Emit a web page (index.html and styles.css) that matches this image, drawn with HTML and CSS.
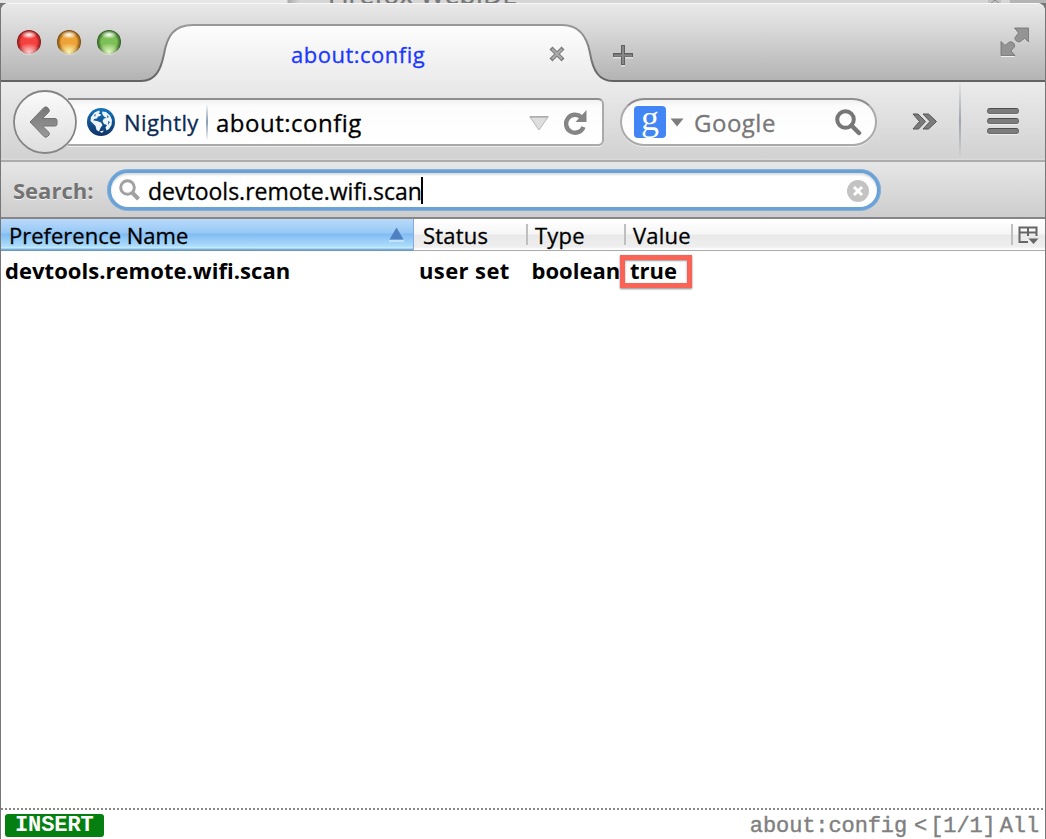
FILE: index.html
```html
<!DOCTYPE html>
<html lang="en">
<head>
<meta charset="utf-8">
<title>about:config</title>
<link rel="stylesheet" href="styles.css">
</head>
<body>
<div class="desktop">
  <div class="behind">
    <span class="behind-title">Firefox WebIDE</span>
    <svg class="behind-right" width="64" height="12" viewBox="0 0 64 12"><path d="M6 0v4h13V0z" fill="#c2c2c2"/><path d="M8 4l5-4 5 4" fill="none" stroke="#888"/><path d="M28 0h36v12H28z" fill="#b4b4b4"/></svg>
  </div>
  <div class="window">
    <header class="titlebar">
      <svg class="tab-shape" width="1044" height="79" viewBox="1 3 1044 79">
        <defs>
          <linearGradient id="tabfill" x1="0" y1="0" x2="0" y2="1"><stop offset="0" stop-color="#fdfdfd"/><stop offset="1" stop-color="#ebebeb"/></linearGradient>
          <linearGradient id="tabline" gradientUnits="userSpaceOnUse" x1="0" y1="24" x2="0" y2="82"><stop offset="0" stop-color="#999"/><stop offset="1" stop-color="#626262"/></linearGradient>
        </defs>
        <path d="M0 82.500V81H141C156 81 161 69 164 54C167 37 173 25 193 25H562C580 25 587 37 590 53C593 71 599 81 613 81H1046V82.500z" fill="url(#tabfill)"/>
        <path d="M0 81H141C156 81 161 69 164 54C167 37 173 25 193 25H562C580 25 587 37 590 53C593 71 599 81 613 81H1046" fill="none" stroke="url(#tabline)" stroke-width="2"/>
      </svg>
      <div class="lights"><i class="light red"></i><i class="light amber"></i><i class="light green"></i></div>
      <div class="tab">
        <span class="tab-label">about:config</span>
        <svg class="tab-close" width="18" height="18" viewBox="0 0 18 18"><path d="M3.500 3.500l11 11M14.500 3.500l-11 11" stroke="#fff" stroke-width="4" transform="translate(0 1)"/><path d="M3 3l12 12M15 3l-12 12" stroke="#777" stroke-width="4.200"/><path d="M4 4l10 10M14 4l-10 10" stroke="#aaa" stroke-width="2.400"/></svg>
      </div>
      <svg class="new-tab" width="22" height="24" viewBox="0 0 22 24"><path d="M1 12.500h20M11 2.500v20" stroke="#dedede" stroke-width="4"/><path d="M1 11h20M11 1v20" stroke="#606060" stroke-width="4"/><path d="M2 11.500h18M11 2v18" stroke="#888" stroke-width="2"/></svg>
      <svg class="expand" width="30" height="32" viewBox="0 0 30 32"><g fill="#f0f0f0" transform="translate(0 1)"><path d="M14.500 1H29V15.500L24.500 11.500L20 15A4 4 0 0 1 15 10.500L18.500 6z"/><path d="M15 29H1V14.500L5 18.500L9.500 15A4 4 0 0 1 14.500 20L11 24z"/></g><g fill="#949494" stroke="#6f6f6f" stroke-width=".8"><path d="M14.500 1H28.500V15L24.500 11.500L20 15A4 4 0 0 1 15 10.500L18.500 6z"/><path d="M15 28.500H1V14.500L5 18.500L9.500 15A4 4 0 0 1 14.500 20L11 24z"/></g></svg>
    </header>

    <nav class="navbar">
      <svg class="back" width="64" height="64" viewBox="0 0 64 64">
        <defs><linearGradient id="bk" x1="0" y1="0" x2="0" y2="1"><stop offset="0" stop-color="#fbfbfb"/><stop offset="1" stop-color="#dedede"/></linearGradient><linearGradient id="ar" x1="0" y1="0" x2="0" y2="1"><stop offset="0" stop-color="#777"/><stop offset="1" stop-color="#999"/></linearGradient></defs>
        <circle cx="32" cy="32" r="31" fill="url(#bk)" stroke="#858585" stroke-width="1.800"/>
        <path d="M17 32L31 17.500Q33 16 35 18L36 19.500Q37 21 35.500 22.500L29.500 28.500H42Q44 28.500 44 30.500V34Q44 36 42 36H29.500L35.500 42Q37 43.500 36 45L34.500 46.500Q33 48 31 46.500z" fill="url(#ar)" stroke="#737373" stroke-width="1"/>
      </svg>
      <div class="urlbar">
        <svg class="globe" width="28" height="28" viewBox="0 0 28 28"><defs><linearGradient id="gl" x1="0" y1="0" x2="0" y2="1"><stop offset="0" stop-color="#1274bd"/><stop offset="1" stop-color="#123366"/></linearGradient></defs><circle cx="14" cy="14" r="14" fill="url(#gl)"/><path d="M7.500 4.500L12 2.500L13 4L11.500 5.500L14 6.500L13.500 8L11 8.500L10 10.500L7 11L6.500 12.500L10 13L14 14.500L15.500 17L13.500 20L12 23.500L9.500 22L8.500 18L5.500 15L3.500 13L4 9zM15 3.500L19 4L23 7.500L25 12L24.500 17L22 21L19.500 22.500L18.500 19.500L20 17L17 16L15.500 13L17 10.500L19.500 10L17 8.500L15.500 6.500zM12.500 23.500L17 22.500L15 25z" fill="#eef5fb"/><path d="M20 7l2 2-2 1zM7 7l2-1-1 3zM21 13l2 1-2 3z" fill="#2874b4"/></svg>
        <span class="identity">Nightly</span>
        <i class="url-divider"></i>
        <span class="url">about:config</span>
        <svg class="drop" width="20" height="15" viewBox="0 0 20 15"><path d="M1 1H19L10 14z" fill="#dedede" stroke="#b8b8b8"/><path d="M.5 .8H19.500" stroke="#999"/></svg>
        <svg class="reload" width="24" height="26" viewBox="0 0 24 26"><path d="M17.300 8.200A9 9 0 1 0 19.500 18" fill="none" stroke="#858585" stroke-width="4.400"/><path d="M22.500 1V13H11.500z" fill="#858585"/></svg>
      </div>
      <div class="searchbar">
        <span class="engine">g</span>
        <svg class="engine-arrow" width="14" height="9" viewBox="0 0 14 9"><path d="M.5 .5H13.500L7 8.500z" fill="#7d7d7d"/></svg>
        <span class="engine-name">Google</span>
        <svg class="glass" width="27" height="27" viewBox="0 0 27 27"><circle cx="10.500" cy="10.500" r="8.300" fill="none" stroke="#777" stroke-width="4"/><path d="M16.500 16.500L24 24" stroke="#777" stroke-width="4.500" stroke-linecap="round"/></svg>
      </div>
      <svg class="overflow" width="26" height="18" viewBox="0 0 26 18"><g fill="#7b7b7b" stroke="#555" stroke-width="1"><path d="M1 1H6L13.500 8.500L6.500 16H1L7.500 8.500z"/><path d="M11 1H16.500L24.500 8.500L16.500 16H11L18 8.500z"/></g></svg>
      <i class="nav-divider"></i>
      <div class="menu"><i></i><i></i><i></i></div>
    </nav>

    <section class="filter">
      <span class="filter-label">Search:</span>
      <div class="filter-box">
        <svg width="22" height="23" viewBox="0 0 22 23"><circle cx="8.500" cy="8.500" r="6.800" fill="none" stroke="#a1a1a1" stroke-width="3"/><path d="M13.500 14L19.500 20" stroke="#a1a1a1" stroke-width="4"/></svg>
        <span class="filter-text">devtools.remote.wifi.scan</span><i class="caret"></i>
        <svg class="clear" width="22" height="22" viewBox="0 0 22 22"><circle cx="11" cy="11" r="11" fill="#c3c3c3"/><path d="M7 7l8 8M15 7l-8 8" stroke="#fff" stroke-width="3"/></svg>
      </div>
    </section>

    <div class="columns head">
      <div class="col sorted"><span class="h1">Preference Name</span><svg width="15" height="15" viewBox="0 0 15 15"><path d="M0 14h15" stroke="#c5e3fa" stroke-width="2"/><path d="M7.500 .5L14.500 12.500H.5z" fill="#4f81c2"/></svg></div>
      <div class="col"><span class="h2">Status</span></div>
      <div class="col"><span class="h3">Type</span></div>
      <div class="col"><span class="h4">Value</span></div>
      <div class="picker"><svg width="21" height="19" viewBox="0 0 21 19"><path d="M10 16H1.500V1.500H18.500V10M1.500 6.500H18.500M10 1.500V10" fill="none" stroke="#666" stroke-width="2"/><path d="M10.500 12.500H20.500L15.500 18z" fill="#666"/></svg></div>
    </div>
    <main class="list">
      <div class="columns row">
        <span class="r1">devtools.remote.wifi.scan</span><span class="r2">user set</span><span class="r3">boolean</span><span class="mark"><span class="r4">true</span></span>
      </div>
    </main>
    <footer class="status"><b class="mode">INSERT</b><span class="where">about:config</span><span class="hist">&lt;</span><span class="count">[1/1]</span><span class="pos">All</span></footer>
  </div>
</div>
</body>
</html>
```
FILE: styles.css
```css
* { box-sizing: border-box; }
body { margin: 0; font-family: "Open Sans", "Noto Sans", sans-serif; color: #000; }
svg, i { display: block; flex: none; }
span { white-space: nowrap; }
.desktop { width: 1046px; height: 839px; overflow: hidden; display: flex; flex-direction: column; background: #777; }
.behind { height: 3px; flex: none; display: flex; justify-content: space-between; overflow: hidden; background: linear-gradient(90deg, #e6e6e6 287px, #aaa 288px, #d6d6d6 300px); padding-left: 328px; }
.behind-title { font-size: 26px; line-height: 28px; margin-top: -20px; color: #777; letter-spacing: .3px; -webkit-text-stroke: .5px; }
.window { flex: 1; margin: 0 1px; display: flex; flex-direction: column; border-radius: 8px 8px 0 0; overflow: hidden; background: #fff; }
.behind, .window { position: relative; }

.titlebar { height: 79px; flex: none; position: relative; display: flex; background: linear-gradient(#e9e9e9, #d4d4d4 40%, #b2b2b2); border-top: 1px solid #f8f8f8; }
.tab-shape { position: absolute; left: 0; top: -1px; }
.lights { display: flex; gap: 16px; padding: 26px 0 0 16px; width: 162px; position: relative; }
.light { width: 24px; height: 24px; border-radius: 50%; box-shadow: 0 1px 0 #ddd; }
.red { background: radial-gradient(ellipse 8px 4px at 50% 20%, #fff 0, #fff0 100%), radial-gradient(ellipse 12px 9px at 50% 92%, #ffd0d0, #ffd0d000), radial-gradient(circle, #f6423e 45%, #7e1414 72%); }
.amber { background: radial-gradient(ellipse 8px 4px at 50% 20%, #fff 0, #fff0 100%), radial-gradient(ellipse 12px 9px at 50% 92%, #fff8b4, #fff8b400), radial-gradient(circle, #eda338 45%, #704409 72%); }
.green { background: radial-gradient(ellipse 8px 4px at 50% 20%, #fff 0, #fff0 100%), radial-gradient(ellipse 12px 9px at 50% 92%, #e4fbc4, #e4fbc400), radial-gradient(circle, #7dc058 45%, #2a561e 72%); }
.tab { position: relative; width: 428px; display: flex; justify-content: space-between; padding: 34px 25px 0 128px; }
.tab-label { font-size: 22px; line-height: 32px; color: #1a38ff; letter-spacing: .5px; -webkit-text-stroke: .3px; }
.tab-close { margin-top: 7px; }
.new-tab { position: relative; margin: 40px 0 0 21px; }
.expand { position: relative; margin: 23px 0 0 366px; }

.navbar { height: 80px; flex: none; display: flex; background: linear-gradient(#ebebeb, #d2d2d2 76px, #dadada 77px); border-bottom: 2px solid #adadad; }
.back { margin: 8px 0 0 12px; position: relative; z-index: 1; }
.urlbar, .searchbar { height: 48px; margin-top: 16px; background: linear-gradient(#f2f2f2, #fcfcfc 7px, #fff); border: 2px solid #aaa; border-top-color: #8e8e8e; display: flex; align-items: center; box-shadow: 0 1px 0 #eee; }
.urlbar { width: 536px; margin-left: -9px; border-radius: 0 6px 6px 0; padding-left: 19px; border-left: 0; }
.globe { margin-top: -1px; }
.identity { font-size: 22px; color: #0a2a55; margin: -1px 0 0 9px; width: 82px; letter-spacing: .4px; -webkit-text-stroke: .3px; }
.url-divider { width: 2px; height: 38px; background: linear-gradient(#fff, #8b9db3, #fff); }
.url { font-size: 24px; margin: 1px 0 0 8px; width: 313px; letter-spacing: .5px; -webkit-text-stroke: .3px; }
.drop { margin-top: 3px; }
.reload { margin: -1px 0 0 15px; }
.searchbar { width: 257px; margin-left: 16px; border-radius: 24px; padding-left: 12px; }
.engine { width: 32px; height: 32px; border-radius: 4px; background: #4285f4; color: #fff; text-align: center; font: 36px/25px "Liberation Serif", serif; }
.engine-arrow { margin-left: 4px; }
.engine-name { font-size: 24px; color: #777; margin: 1px 0 0 10px; width: 141px; letter-spacing: .5px; -webkit-text-stroke: .3px; }
.overflow { margin: 31px 0 0 35px; }
.nav-divider { width: 2px; height: 76px; margin: 1px 0 0 21px; background: linear-gradient(#e4e4e4, #9ba5b0 50%, #d4d4d4); }
.menu { margin: 26px 0 0 26px; display: flex; flex-direction: column; gap: 4px; }
.menu i { width: 32px; height: 6px; border-radius: 3px; background: #7d7d7d; border: 1px solid #6b6b6b; border-top-color: #4e4e4e; box-shadow: 0 1px 0 #eee; }

.filter { height: 57px; flex: none; display: flex; background: linear-gradient(#e6e6e6, #cdcdcd); border-bottom: 2px solid #868686; }
.filter-label { font-size: 22px; font-weight: 700; color: #737373; margin: 12px 0 0 12px; line-height: 32px; width: 94px; text-shadow: 0 1px 0 #f2f2f2; }
.filter-box { width: 774px; height: 42px; margin-top: 7px; border-radius: 21px; border: 4px solid #6aa1d6; outline: 1px solid #9dc0e180; outline-offset: -1px; background: #fff; display: flex; align-items: center; padding-left: 8px; box-shadow: inset 0 2px 2px #ddd; }
.filter-box svg { margin-top: 1px; }
.filter-text { font-size: 23px; margin: 2px 0 0 7px; width: 273px; -webkit-text-stroke: .3px; }
.caret { width: 2px; height: 27px; background: #000; }
.filter-box .clear { margin: 2px 8px 0 auto; }

.columns { display: grid; grid-template-columns: 413px 112px 98px 1fr 34px; flex: none; }
.head { height: 32px; font-size: 22px; line-height: 33px; background: linear-gradient(#fff, #f6f6f6 15px, #e9e9e9 16px, #eee 28px, #fff 30px); border-bottom: 1px solid #aaa; letter-spacing: .2px; -webkit-text-stroke: .3px; }
.col { padding-left: 9px; position: relative; }
.col + .col + .col::before, .picker::before { content: ""; position: absolute; left: 0; top: 5px; width: 2px; height: 21px; background: #bfbfbf; }
.sorted { display: flex; justify-content: space-between; padding: 0 9px 0 8px; height: 32px; letter-spacing: 0; background: linear-gradient(#b9dafa, #96c8f5 14px, #80bbf3 15px, #acdcfb 27px, #c4effc 29px, #89b5dc 30px, #5d8fb9 32px); border-right: 1px solid #88a9e0; }
.sorted svg { margin-top: 8px; }
.picker { position: relative; padding: 7px 0 0 7px; }
.list { flex: 1; }
.row { grid-template-columns: 417px 112.5px 88.500px 72px; font-size: 22px; font-weight: 700; line-height: 32px; padding: 4px 0 0 1px; }
.row > span:not(.mark) { margin-top: -1px; }
.r1 { padding-left: 3px; letter-spacing: .04px; }
.r2 { letter-spacing: .4px; }
.mark { height: 33px; border: 5px solid #fa6456; box-shadow: 0 1px 2px #888, inset 0 1px 2px #999; line-height: 21px; padding-left: 5px; position: relative; }
.status { height: 31px; flex: none; display: flex; background: repeating-linear-gradient(90deg, #888 0 2px, #fff 2px 4px) 0 0 / 100% 2px no-repeat; font: 22px/26px "Liberation Mono", monospace; letter-spacing: -.1px; color: #808080; padding: 6px 6px 0 4px; -webkit-text-stroke: .4px; }
.mode { width: 99px; height: 23px; border-radius: 3px; background: #058010; color: #fff; line-height: 24px; padding-left: 10px; -webkit-text-stroke: 0; }
.where { margin-left: auto; }
.hist { margin-left: 7px; }
.count { margin-left: 3px; }
.pos { margin-left: 4px; }
```
